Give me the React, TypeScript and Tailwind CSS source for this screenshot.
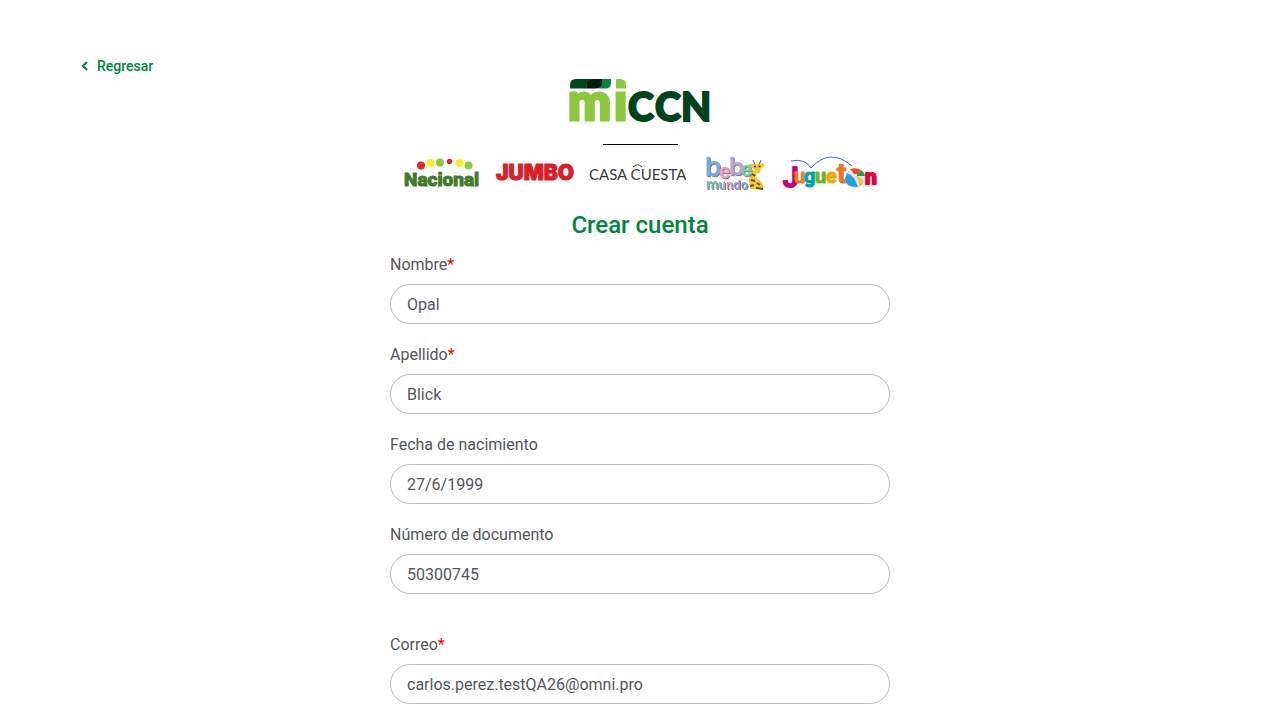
import { useId } from "react";

type FieldProps = {
  label: string;
  name: string;
  value: string;
  type?: string;
  required?: boolean;
};

function Field({ label, name, value, type = "text", required = false }: FieldProps) {
  const id = useId();
  return (
    <div className="flex flex-col gap-[7px]">
      <label htmlFor={id} className="text-base leading-6">
        {label}
        {required && <span className="text-[#ff0000]">*</span>}
      </label>
      <input
        id={id}
        name={name}
        type={type}
        defaultValue={value}
        required={required}
        className="h-10 w-full rounded-full border border-[#bdbdc0] bg-white px-4 text-base outline-none focus:border-[#00843f]"
      />
    </div>
  );
}

function MiCcnLogo() {
  return (
    <svg role="img" aria-label="miCCN" width="142" height="44" viewBox="0 0 142 44" className="shrink-0 overflow-visible">
      <path d="M1 9.500V6Q1 0 7 0H24Q17 2 17 9.500Z" fill="#00431f" />
      <path d="M30 9.500Q33 8 33 0H42V4Q42 9.500 36 9.500Z" fill="#00843f" />
      <path d="M17 9.500Q17 0 24 0H33V4Q33 9.500 27 9.500Z" fill="#001f0c" />
      <path d="M47 0H51Q57 0 57 6V9.500H47Z" fill="#8dc83f" />
      <text x="-1" y="41" fontFamily="Lato, sans-serif" fontSize="51" fontWeight="900" fill="#8dc83f" stroke="#8dc83f" strokeWidth="3">
        m<tspan x="45">ı</tspan>
      </text>
      <text x="59" y="42" fontFamily="Lato, sans-serif" fontSize="39" fontWeight="900" fill="#00431f" stroke="#00431f" strokeWidth="2">
        C<tspan x="86">C</tspan><tspan x="112">N</tspan>
      </text>
    </svg>
  );
}

function NacionalLogo() {
  return (
    <svg role="img" aria-label="Nacional" width="90" height="36" viewBox="0 0 90 36" className="shrink-0 overflow-visible">
      <text x="4" y="31" fontFamily="Roboto, sans-serif" fontSize="19" fontWeight="800" fill="#43792a" stroke="#43792a" strokeWidth="1">
        Nacional
      </text>
      <circle cx="21" cy="10.500" r="4" fill="#e8232b" />
      <circle cx="30.500" cy="8" r="4" fill="#fdee21" />
      <circle cx="40" cy="7.500" r="4" fill="#8dc83f" />
      <circle cx="49.500" cy="6.500" r="2.700" fill="#e8232b" />
      <circle cx="59.500" cy="8" r="4" fill="#fdee21" />
      <circle cx="68.500" cy="10.500" r="4" fill="#8dc83f" />
    </svg>
  );
}

function JumboLogo() {
  return (
    <svg role="img" aria-label="Jumbo" width="94" height="36" viewBox="0 0 94 36" className="shrink-0 overflow-visible">
      <text x="6" y="25" fontFamily="Inter, sans-serif" fontSize="21" fontWeight="900" fill="#da1f2b" stroke="#da1f2b" strokeWidth="1">
        JUMBO
      </text>
    </svg>
  );
}

function CasaCuestaLogo() {
  return (
    <svg role="img" aria-label="Casa Cuesta" width="110" height="36" viewBox="0 0 110 36" className="shrink-0 overflow-visible">
      <text x="5" y="25" fontFamily="Lato, sans-serif" fontSize="15" fill="#3b3b39">
        CASA CUESTA
      </text>
      <path d="M49 12Q53.500 7.500 58 12" fill="none" stroke="#3b3b39" strokeWidth="1" />
    </svg>
  );
}

function BebeMundoLogo() {
  return (
    <svg role="img" aria-label="Bebe mundo" width="78" height="36" viewBox="0 0 78 36" className="shrink-0 overflow-visible">
      <path d="M61 10L59 5M65 10L67 5" stroke="#7a5a1c" strokeWidth="1" />
      <path d="M52 11Q57 8 60 9H66Q69 7 71 10Q69 13 67 13L66 17Q64 20 61 17L59 13Z" fill="#f2c62d" />
      <path d="M57 15L62 17L63 24Q70 27 69 34H56L55 25Z" fill="#f2c62d" />
      <path d="M58 19L61 21M57 25L61 26M63 28L66 30M56 31L60 30M62 33L69 34" stroke="#6b4c18" strokeWidth="2" />
      <circle cx="61" cy="11.500" r="1" fill="#2f2614" />
      <circle cx="65.500" cy="11.500" r="1" fill="#2f2614" />
      <g fontFamily="Inter, sans-serif" className="[filter:drop-shadow(1px_1px_0_#777b90)]">
        <text x="11" y="21" fontSize="26" fontWeight="500" fill="#78acd6" stroke="#78acd6" strokeWidth="0.500">
          b<tspan x="25" y="23" fontSize="19" fill="#f4a0bd" stroke="#f4a0bd">e</tspan>
          <tspan x="35" y="20" fontSize="24" fill="#c0a5d6" stroke="#c0a5d6">b</tspan>
          <tspan x="47" y="21" fontSize="19" fill="#83cf9a" stroke="#83cf9a">e</tspan>
        </text>
        <text x="12" y="34" fontSize="14" fontWeight="600" fill="#70c69a">
          m<tspan fontSize="12" fill="#8aa9c2">u</tspan>
          <tspan fontSize="12" fill="#eb8fae">n</tspan>
          <tspan fontSize="12" fill="#a991c6">d</tspan>
          <tspan fontSize="12" fill="#78acd6">o</tspan>
        </text>
      </g>
    </svg>
  );
}

function JuguetonLogo() {
  return (
    <svg role="img" aria-label="Jugueton" width="108" height="36" viewBox="0 0 108 36" className="shrink-0 overflow-visible">
      <path d="M19 6Q33 3 39 13Q58-8 80 11" fill="none" stroke="#3d73b5" strokeWidth="1" />
      <text y="28" fontFamily="Roboto, sans-serif" fontWeight="700" fontSize="20" strokeWidth="1" strokeLinejoin="round">
        <tspan x="11" y="32" fontSize="28" fontWeight="500" fill="#c8007d" stroke="#c8007d" strokeWidth="2">J</tspan>
        <tspan x="22" y="28" fill="#ef7c1c" stroke="#ef7c1c">u</tspan>
        <tspan x="32" fill="#00a2ae" stroke="#00a2ae">g</tspan>
        <tspan x="43" fill="#68b42d" stroke="#68b42d">u</tspan>
        <tspan x="54" fill="#f7a600" stroke="#f7a600">e</tspan>
        <tspan x="65" y="28" fontSize="28" fill="#ee7325" stroke="#ee7325">t</tspan>
        <tspan x="93" y="29" fontSize="21" fill="#e4003a" stroke="#e4003a" strokeWidth="2">n</tspan>
      </text>
      <circle cx="83" cy="23" r="10" fill="#e2e3e4" />
      <path d="M78 14Q84 12 89 15L84 21Z" fill="#e94b25" />
      <path d="M84 21L89 15Q92 17 93 21Z" fill="#249950" />
      <path d="M75 18Q82 20 86 32Q74 33 73 24Z" fill="#20a4df" />
      <path d="M84 21Q92 23 91 29L87 32Q88 26 84 21Z" fill="#f4c232" />
      <circle cx="84" cy="20" r="1" fill="#fff" />
    </svg>
  );
}

export default function App() {
  return (
    <main className="flex min-h-screen flex-col bg-white px-6 pt-14 pb-4 font-['Roboto',sans-serif] text-[#54565b] sm:px-20">
      <a href="#" className="flex items-center gap-2 self-start text-sm leading-5 font-medium text-[#00843f]">
        <svg width="9" height="10" viewBox="0 0 9 10" aria-hidden="true">
          <path d="M7 1L3 5L7 9" fill="none" stroke="currentColor" strokeWidth="2" />
        </svg>
        Regresar
      </a>

      <header className="mt-[3px] flex flex-col items-center">
        <MiCcnLogo />
        <div className="mt-[21px] h-px w-[75px] bg-black" />
        <div className="mt-[10px] flex flex-wrap justify-center">
          <NacionalLogo />
          <JumboLogo />
          <CasaCuestaLogo />
          <BebeMundoLogo />
          <JuguetonLogo />
        </div>
        <h1 className="mt-[18px] text-2xl leading-8 font-medium text-[#00843f]">Crear cuenta</h1>
      </header>

      <form className="mx-auto mt-3 flex w-full max-w-[500px] flex-col gap-[19px]">
        <Field label="Nombre" name="nombre" value="Opal" required />
        <Field label="Apellido" name="apellido" value="Blick" required />
        <Field label="Fecha de nacimiento" name="nacimiento" value="27/6/1999" />
        <Field label="Número de documento" name="documento" value="50300745" />
        <div className="mt-5">
          <Field label="Correo" name="correo" type="email" value="carlos.perez.testQA26@omni.pro" required />
        </div>
      </form>
    </main>
  );
}
